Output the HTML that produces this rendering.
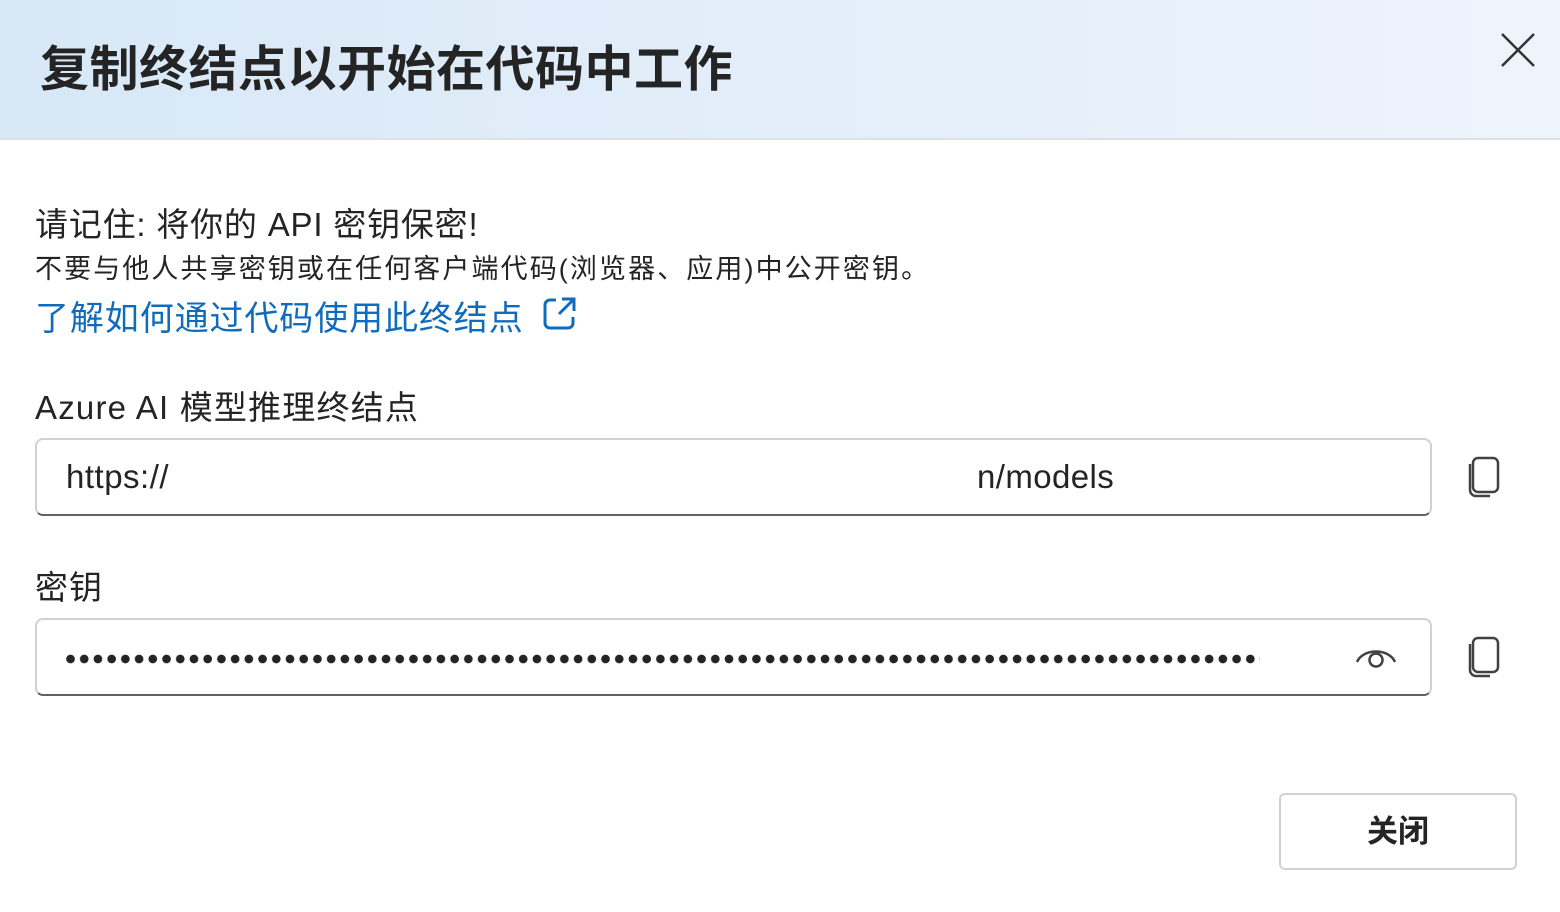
<!DOCTYPE html>
<html><head><meta charset="utf-8"><style>
*{margin:0;padding:0;box-sizing:border-box}
body{width:1560px;height:912px;background:#fff;font-family:"Liberation Sans","Noto Sans CJK SC",sans-serif;color:#242424;position:relative;overflow:hidden}
.hdr{position:absolute;left:0;top:0;width:1560px;height:140px;background:linear-gradient(90deg,#d8e8f7,#eef4fc);border-bottom:2px solid #e0e0e0}
.t{position:absolute;left:40px;top:30px;font-size:49px;font-weight:bold;color:#242424;letter-spacing:0.5px;white-space:nowrap}
.a{position:absolute;white-space:nowrap}
.box{position:absolute;left:35px;width:1397px;height:78px;border:2px solid #d1d1d1;border-bottom:2px solid #616161;border-radius:8px}
.dots{position:absolute;left:66px;top:654px;width:1194px;height:10px;background:radial-gradient(circle at 4.5px 5px,#242424 4px,transparent 4.6px) 0 0/13.72px 10px repeat-x}
.btn{position:absolute;left:1279px;top:793px;width:238px;height:77px;border:2px solid #d1d1d1;border-radius:6px;font-size:31px;font-weight:bold;text-align:center;line-height:73px}
</style></head><body>
<div class="hdr"></div>
<div class="t">复制终结点以开始在代码中工作</div>
<svg class="a" style="left:1500px;top:32px" width="36" height="36" viewBox="0 0 36 36"><path d="M2 2L34 34M34 2L2 34" stroke="#333" stroke-width="2.5"/></svg>
<div class="a" style="left:35px;top:198px;font-size:33px;letter-spacing:0.8px">请记住: 将你的 API 密钥保密!</div>
<div class="a" style="left:35px;top:247px;font-size:27px;letter-spacing:2.1px">不要与他人共享密钥或在任何客户端代码(浏览器、应用)中公开密钥。</div>
<div class="a" style="left:35px;top:291px;font-size:34px;letter-spacing:0.9px;color:#0f6cbd">了解如何通过代码使用此终结点</div>
<svg class="a" style="left:543px;top:297px" width="33" height="33" viewBox="0 0 33 33" fill="none" stroke="#0f6cbd" stroke-width="3"><path d="M13 3H7a5 5 0 0 0-5 5v18a5 5 0 0 0 5 5h18a5 5 0 0 0 5-5v-6"/><path d="M19 2h12v12M31 2L16 17"/></svg>
<div class="a" style="left:35px;top:381px;font-size:33px;letter-spacing:1.2px">Azure AI 模型推理终结点</div>
<div class="box" style="top:438px"></div>
<div class="a" style="left:66px;top:458px;font-size:33px;letter-spacing:0.5px">https://</div>
<div class="a" style="left:977px;top:458px;font-size:33px;letter-spacing:0.4px">n/models</div>
<svg class="a" style="left:1467px;top:456px" width="34" height="42" viewBox="0 0 34 42" fill="none" stroke="#424242" stroke-width="2.5"><rect x="6" y="2" width="25" height="34" rx="5"/><path d="M3 8v26a6 6 0 0 0 6 6h14"/></svg>
<div class="a" style="left:35px;top:561px;font-size:33px;letter-spacing:1px">密钥</div>
<div class="box" style="top:618px"></div>
<div class="dots"></div>
<svg class="a" style="left:1355px;top:642px" width="42" height="30" viewBox="0 0 42 30" fill="none" stroke="#424242" stroke-width="2.5"><path d="M2 20C8 6 34 6 40 20"/><circle cx="21" cy="18" r="6.5"/></svg>
<svg class="a" style="left:1467px;top:636px" width="34" height="42" viewBox="0 0 34 42" fill="none" stroke="#424242" stroke-width="2.5"><rect x="6" y="2" width="25" height="34" rx="5"/><path d="M3 8v26a6 6 0 0 0 6 6h14"/></svg>
<div class="btn">关闭</div>
</body></html>
